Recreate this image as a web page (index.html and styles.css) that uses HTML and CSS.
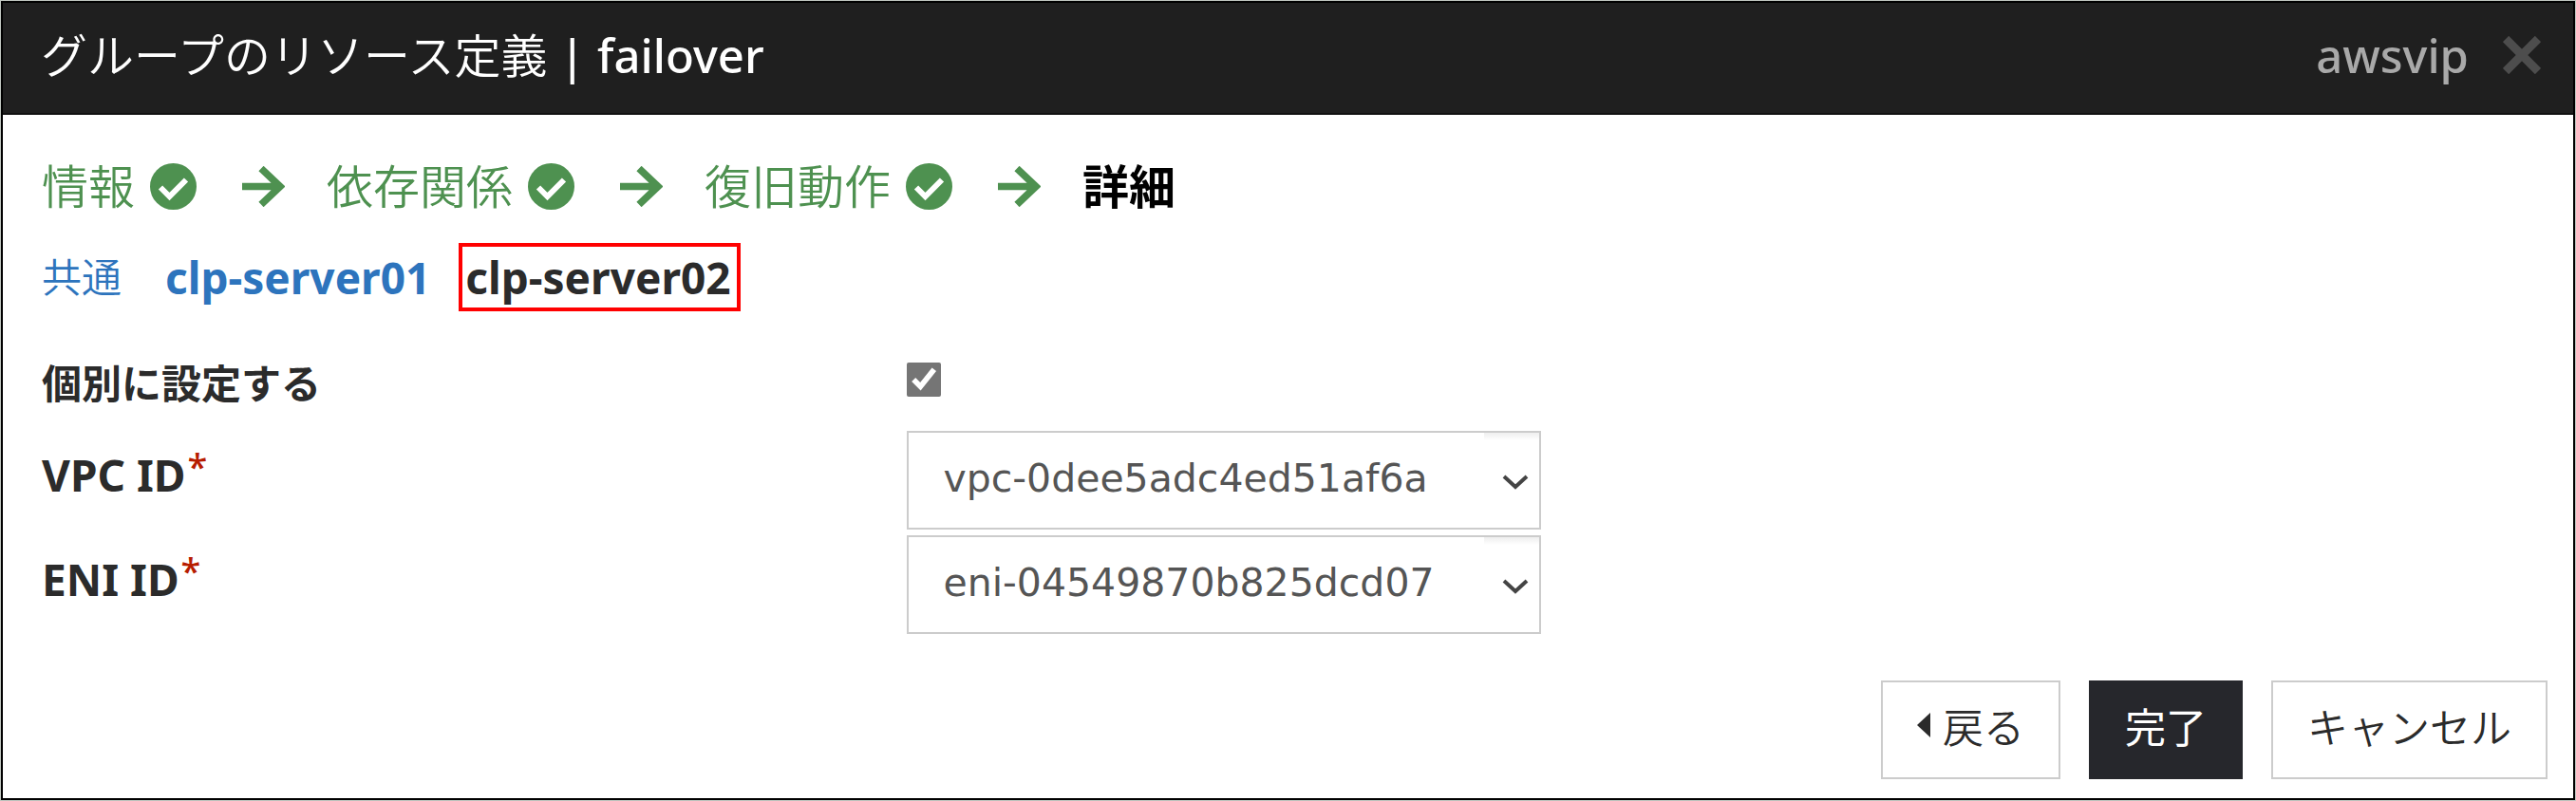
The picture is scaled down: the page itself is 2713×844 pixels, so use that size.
FILE: index.html
```html
<!DOCTYPE html>
<html lang="ja">
<head>
<meta charset="utf-8">
<title>グループのリソース定義 | failover</title>
<link rel="stylesheet" href="styles.css">
</head>
<body>
<svg class="sprite" aria-hidden="true">
  <symbol id="check" viewBox="0 0 49 49"><circle cx="24.5" cy="24.5" r="24.5" fill="currentColor"/><path d="M11 25.5l9.500 9.500L38 17.500" fill="none" stroke="#fff" stroke-width="6"/></symbol>
  <symbol id="arrow" viewBox="0 0 45 43"><path d="M0 21.500H39M20 2.500L40 21.500L20 40.500" fill="none" stroke="currentColor" stroke-width="7.500"/></symbol>
  <symbol id="chevron" viewBox="0 0 28 16"><path d="M2 2l12 11L26 2" fill="none" stroke="currentColor" stroke-width="4"/></symbol>
</svg>
<main class="dialog">
  <header class="header">
    <h1 class="title">グループのリソース定義 <span class="group">| failover</span></h1>
    <span class="kind">awsvip</span>
    <button class="close" type="button" aria-label="閉じる"><svg class="close-icon" viewBox="0 0 40 40"><path d="M3 3l34 34M37 3L3 37" fill="none" stroke="currentColor" stroke-width="9"/></svg></button>
  </header>
  <div class="body">
    <ol class="steps">
      <li class="step"><span>情報</span><svg class="check"><use href="#check"/></svg><svg class="arrow"><use href="#arrow"/></svg></li>
      <li class="step"><span>依存関係</span><svg class="check"><use href="#check"/></svg><svg class="arrow"><use href="#arrow"/></svg></li>
      <li class="step"><span>復旧動作</span><svg class="check"><use href="#check"/></svg><svg class="arrow"><use href="#arrow"/></svg></li>
      <li class="step current"><span>詳細</span></li>
    </ol>
    <nav class="tabs">
      <a class="tab common" href="#common">共通</a>
      <a class="tab server" href="#server01">clp-server01</a>
      <a class="tab server selected" href="#server02">clp-server02</a>
    </nav>
    <form class="form">
      <div class="row check-row">
        <label class="label" for="individual">個別に設定する</label>
        <input class="checkbox" id="individual" type="checkbox" checked>
      </div>
      <div class="row">
        <label class="label" for="vpc">VPC ID<sup class="required">*</sup></label>
        <div class="field"><select class="select" id="vpc"><option>vpc-0dee5adc4ed51af6a</option></select><svg class="chevron"><use href="#chevron"/></svg></div>
      </div>
      <div class="row">
        <label class="label" for="eni">ENI ID<sup class="required">*</sup></label>
        <div class="field"><select class="select" id="eni"><option>eni-04549870b825dcd07</option></select><svg class="chevron"><use href="#chevron"/></svg></div>
      </div>
    </form>
  </div>
  <footer class="footer">
    <button class="button" type="button"><svg class="back-icon" viewBox="0 0 14 26"><path d="M14 0v26L0 13z" fill="currentColor"/></svg>戻る</button>
    <button class="button primary" type="button">完了</button>
    <button class="button" type="button">キャンセル</button>
  </footer>
</main>
</body>
</html>
```

FILE: styles.css
```css
* { box-sizing: border-box; }
body {
  margin: 0;
  padding: 1px;
  background: #c0c6c0;
  color: #2b2b2b;
  font-family: "Noto Sans", "Noto Sans CJK JP", sans-serif;
  font-size: 42px;
}
.sprite { display: none; }
.dialog {
  min-height: calc(100vh - 2px);
  display: flex;
  flex-direction: column;
  background: #fff;
  border: 2px solid #000;
}
.header {
  display: flex;
  align-items: center;
  height: 118px;
  padding: 0 34px 6px 40px;
  background: #1f1f1f;
  border-bottom: 2px solid #111;
  color: #fff;
}
.title { margin: 0; flex: 1; font-size: 49px; font-weight: 350; line-height: 64px; }
.group { font-weight: 500; }
.kind { color: #a9a9a9; font-size: 49px; font-weight: 500; line-height: 64px; }
.close { display: flex; margin: 0 0 0 36px; padding: 0; border: 0; background: none; color: #4d4d4d; }
.close-icon { width: 40px; height: 40px; }
.body { flex: 1; padding: 39px 28px 0 41px; }
.steps {
  display: flex;
  gap: 44px;
  margin: 0;
  padding: 0;
  list-style: none;
  color: #4e9150;
  font-size: 49px;
  font-weight: 350;
  line-height: 72px;
}
.step { display: flex; align-items: center; }
.current { color: #000; font-weight: 700; }
.check { width: 49px; height: 49px; margin-left: 16px; }
.arrow { width: 45px; height: 43px; margin-left: 48px; }
.tabs { display: flex; align-items: center; margin-top: 24px; }
.tab { color: #2d74bd; line-height: 64px; text-decoration: none; }
.common { margin-right: 46px; font-weight: 350; }
.server { font-size: 46px; font-weight: 700; }
.selected { margin-left: 30px; padding: 0 6px 0 3px; border: 4px solid #f00; color: #2b2b2b; }
.form { margin-top: 48px; }
.row {
  display: grid;
  grid-template-columns: 34.55% 1fr;
  align-items: start;
  margin-bottom: 6px;
}
.check-row { margin-bottom: 22px; }
.label { font-size: 46px; font-weight: 700; line-height: 92px; }
.check-row .label { font-size: 42px; line-height: 56px; }
.required { margin-left: 2px; font-size: 38px; font-weight: 500; line-height: 0; color: #b71c00; vertical-align: 12px; }
.checkbox { width: 36px; height: 36px; margin: 6px 0 0; accent-color: #757575; }
.field { display: grid; width: 668px; align-items: center; }
.select {
  grid-area: 1 / 1;
  height: 104px;
  padding: 0 80px 4px 36px;
  appearance: none;
  border: 2px solid #ccc;
  border-radius: 0;
  background: #fff linear-gradient(#eee, #fff) no-repeat right top / 58px 8px;
  color: #555;
  font-family: "DejaVu Sans", sans-serif;
  font-size: 41px;
}
.chevron { grid-area: 1 / 1; justify-self: end; width: 28px; height: 22px; margin: 4px 13px 0 0; color: #444; pointer-events: none; }
.footer { display: flex; justify-content: flex-end; gap: 30px; padding: 0 27px 20px; }
.button {
  display: flex;
  align-items: center;
  gap: 13px;
  height: 104px;
  padding: 0 36px 10px;
  border: 2px solid #ccc;
  background: #fff;
  color: #2b2b2b;
  font-family: "Noto Sans CJK JP", sans-serif;
  font-size: 43px;
  font-weight: 350;
}
.primary { border-color: #26272c; background: #26272c; color: #fff; font-weight: 400; }
.back-icon { width: 14px; height: 26px; }
```
